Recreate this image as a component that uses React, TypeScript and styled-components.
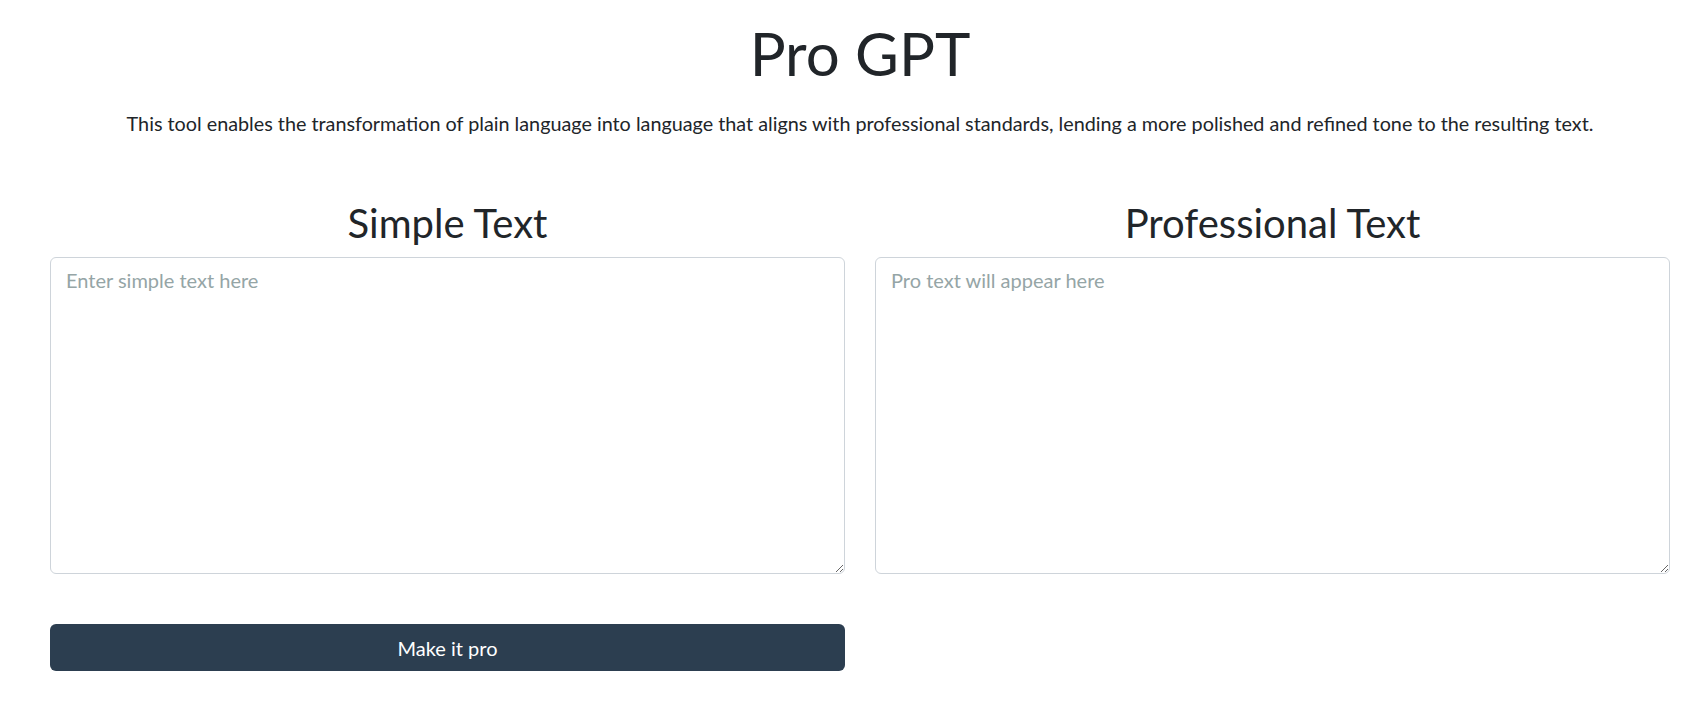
import React from "react";
import styled, { createGlobalStyle } from "styled-components";

const GlobalStyle = createGlobalStyle`
  html, body {
    margin: 0;
    padding: 0;
    background: #ffffff;
  }
  body {
    font-family: Lato, "Open Sans", "Liberation Sans", sans-serif;
    font-size: 20px;
    color: #212529;
  }
  * { box-sizing: border-box; }
`;

const Page = styled.main`
  padding: 17px 38px 30px 50px;
`;

const Header = styled.header`
  display: flex;
  flex-direction: column;
  align-items: center;
  text-align: center;
`;

const Title = styled.h1`
  margin: 0;
  font-size: 60px;
  line-height: 72px;
  font-weight: 400;
  color: #212529;
`;

const Subtitle = styled.p`
  margin: 19px 0 0;
  font-size: 19.8px;
  line-height: 30px;
  color: #212529;
`;

const Columns = styled.section`
  display: grid;
  grid-template-columns: 1fr 1fr;
  column-gap: 30px;
  margin-top: 61px;
`;

const Column = styled.div`
  display: flex;
  flex-direction: column;
`;

const ColumnHeading = styled.h2`
  margin: 0 0 10px;
  font-size: 40px;
  line-height: 48px;
  font-weight: 400;
  text-align: center;
  color: #212529;
`;

const TextBox = styled.textarea`
  display: block;
  width: 100%;
  height: 317px;
  padding: 7px 15px;
  font-family: Lato, "Open Sans", "Liberation Sans", sans-serif;
  font-size: 20px;
  line-height: 30px;
  color: #212529;
  background: #ffffff;
  border: 1px solid #ced4da;
  border-radius: 6px;
  outline: none;
  &::placeholder {
    color: #95a5a6;
    opacity: 1;
  }
`;

const Actions = styled.div`
  display: grid;
  grid-template-columns: 1fr 1fr;
  column-gap: 30px;
  margin-top: 50px;
`;

const PrimaryButton = styled.button`
  height: 47px;
  border: none;
  border-radius: 6px;
  background: #2c3e50;
  color: #ffffff;
  font-family: Lato, "Open Sans", "Liberation Sans", sans-serif;
  font-size: 20px;
  cursor: pointer;
`;

export default function App() {
  return (
    <>
      <GlobalStyle />
      <Page>
        <Header>
          <Title>Pro GPT</Title>
          <Subtitle>
            This tool enables the transformation of plain language into language that aligns with professional
            standards, lending a more polished and refined tone to the resulting text.
          </Subtitle>
        </Header>
        <Columns>
          <Column>
            <ColumnHeading>Simple Text</ColumnHeading>
            <TextBox placeholder="Enter simple text here" />
          </Column>
          <Column>
            <ColumnHeading>Professional Text</ColumnHeading>
            <TextBox placeholder="Pro text will appear here" readOnly />
          </Column>
        </Columns>
        <Actions>
          <PrimaryButton type="button">Make it pro</PrimaryButton>
        </Actions>
      </Page>
    </>
  );
}
